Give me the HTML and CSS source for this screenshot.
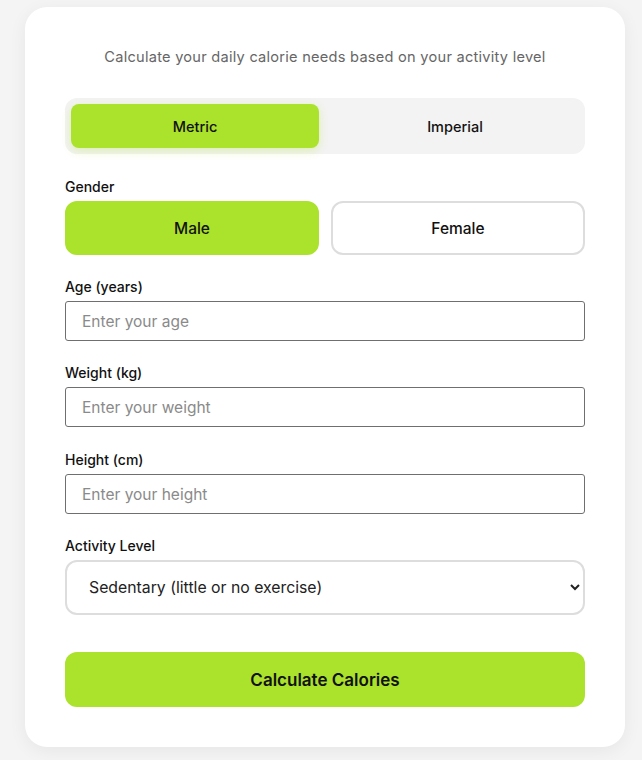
FILE: index.html
```html
<!DOCTYPE html>
<html lang="en">
<head>
<meta charset="utf-8">
<title>Calorie Calculator</title>
<link rel="stylesheet" href="styles.css">
</head>
<body>
<div class="card">
  <p class="subtitle">Calculate your daily calorie needs based on your activity level</p>
  <div class="units">
    <button class="unit active">Metric</button>
    <button class="unit">Imperial</button>
  </div>
  <div class="field">
    <label class="label">Gender</label>
    <div class="genders">
      <button class="gender active">Male</button>
      <button class="gender">Female</button>
    </div>
  </div>
  <div class="field">
    <label class="label" for="age">Age (years)</label>
    <input class="input" id="age" type="text" placeholder="Enter your age">
  </div>
  <div class="field wide">
    <label class="label" for="weight">Weight (kg)</label>
    <input class="input" id="weight" type="text" placeholder="Enter your weight">
  </div>
  <div class="field">
    <label class="label" for="height">Height (cm)</label>
    <input class="input" id="height" type="text" placeholder="Enter your height">
  </div>
  <div class="field last">
    <label class="label" for="activity">Activity Level</label>
    <select class="select" id="activity">
      <option>Sedentary (little or no exercise)</option>
      <option>Lightly active (1-3 days/week)</option>
      <option>Moderately active (3-5 days/week)</option>
      <option>Very active (6-7 days/week)</option>
    </select>
  </div>
  <button class="calc">Calculate Calories</button>
</div>
</body>
</html>
```
FILE: styles.css
```css
* { box-sizing: border-box; }
html, body { margin: 0; }
body {
  background: #f4f4f4;
  font-family: Inter, "Open Sans", sans-serif;
  color: #111;
  padding: 7px 0 0 25px;
  height: 760px;
  overflow: hidden;
}
.card {
  width: 600px;
  background: #fff;
  border-radius: 22px;
  padding: 40px 40px 40px;
  box-shadow: 0 4px 18px rgba(0,0,0,0.06);
}
.subtitle {
  margin: 0 0 30px;
  text-align: center;
  font-size: 14.6px;
  letter-spacing: 0.25px;
  line-height: 21px;
  color: #666;
}
.units {
  display: grid;
  grid-template-columns: 1fr 1fr;
  gap: 12px;
  padding: 6px;
  background: #f3f3f3;
  border-radius: 12px;
  margin-bottom: 22px;
}
button {
  font-family: inherit;
  cursor: pointer;
}
.unit {
  height: 44px;
  border: none;
  border-radius: 8px;
  background: transparent;
  font-size: 14.5px;
  font-weight: 500;
  color: #111;
}
.unit.active {
  background: #abe22b;
  box-shadow: 0 3px 10px rgba(171,226,43,0.3);
}
.field { margin-bottom: 21px; }
.field.wide { margin-bottom: 22px; }
.label {
  display: block;
  font-size: 14px;
  font-weight: 500;
  line-height: 21px;
  margin-bottom: 4px;
  color: #111;
}
.genders {
  display: grid;
  grid-template-columns: 1fr 1fr;
  gap: 12px;
}
.gender {
  height: 54px;
  border-radius: 12px;
  border: 2px solid #dddddd;
  background: #fff;
  font-size: 15.5px;
  font-weight: 500;
  color: #111;
}
.gender.active {
  background: #abe22b;
  border-color: #abe22b;
}
.input {
  display: block;
  width: 100%;
  height: 40px;
  border: 1px solid #6f6f6f;
  border-radius: 3px;
  padding: 0 16px;
  font-family: inherit;
  font-size: 15.5px;
  color: #111;
}
.input::placeholder { color: #8a8a8a; }
.select {
  display: block;
  width: 100%;
  height: 55px;
  border: 2px solid #dddddd;
  border-radius: 12px;
  background: #fff;
  padding: 0 16px 0 18px;
  font-family: inherit;
  font-size: 15.8px;
  color: #222;
}
.field.last { margin-bottom: 37px; }
.calc {
  display: block;
  width: 100%;
  height: 55px;
  border: none;
  border-radius: 12px;
  background: #abe22b;
  font-size: 17px;
  font-weight: 600;
  color: #111;
}
```
